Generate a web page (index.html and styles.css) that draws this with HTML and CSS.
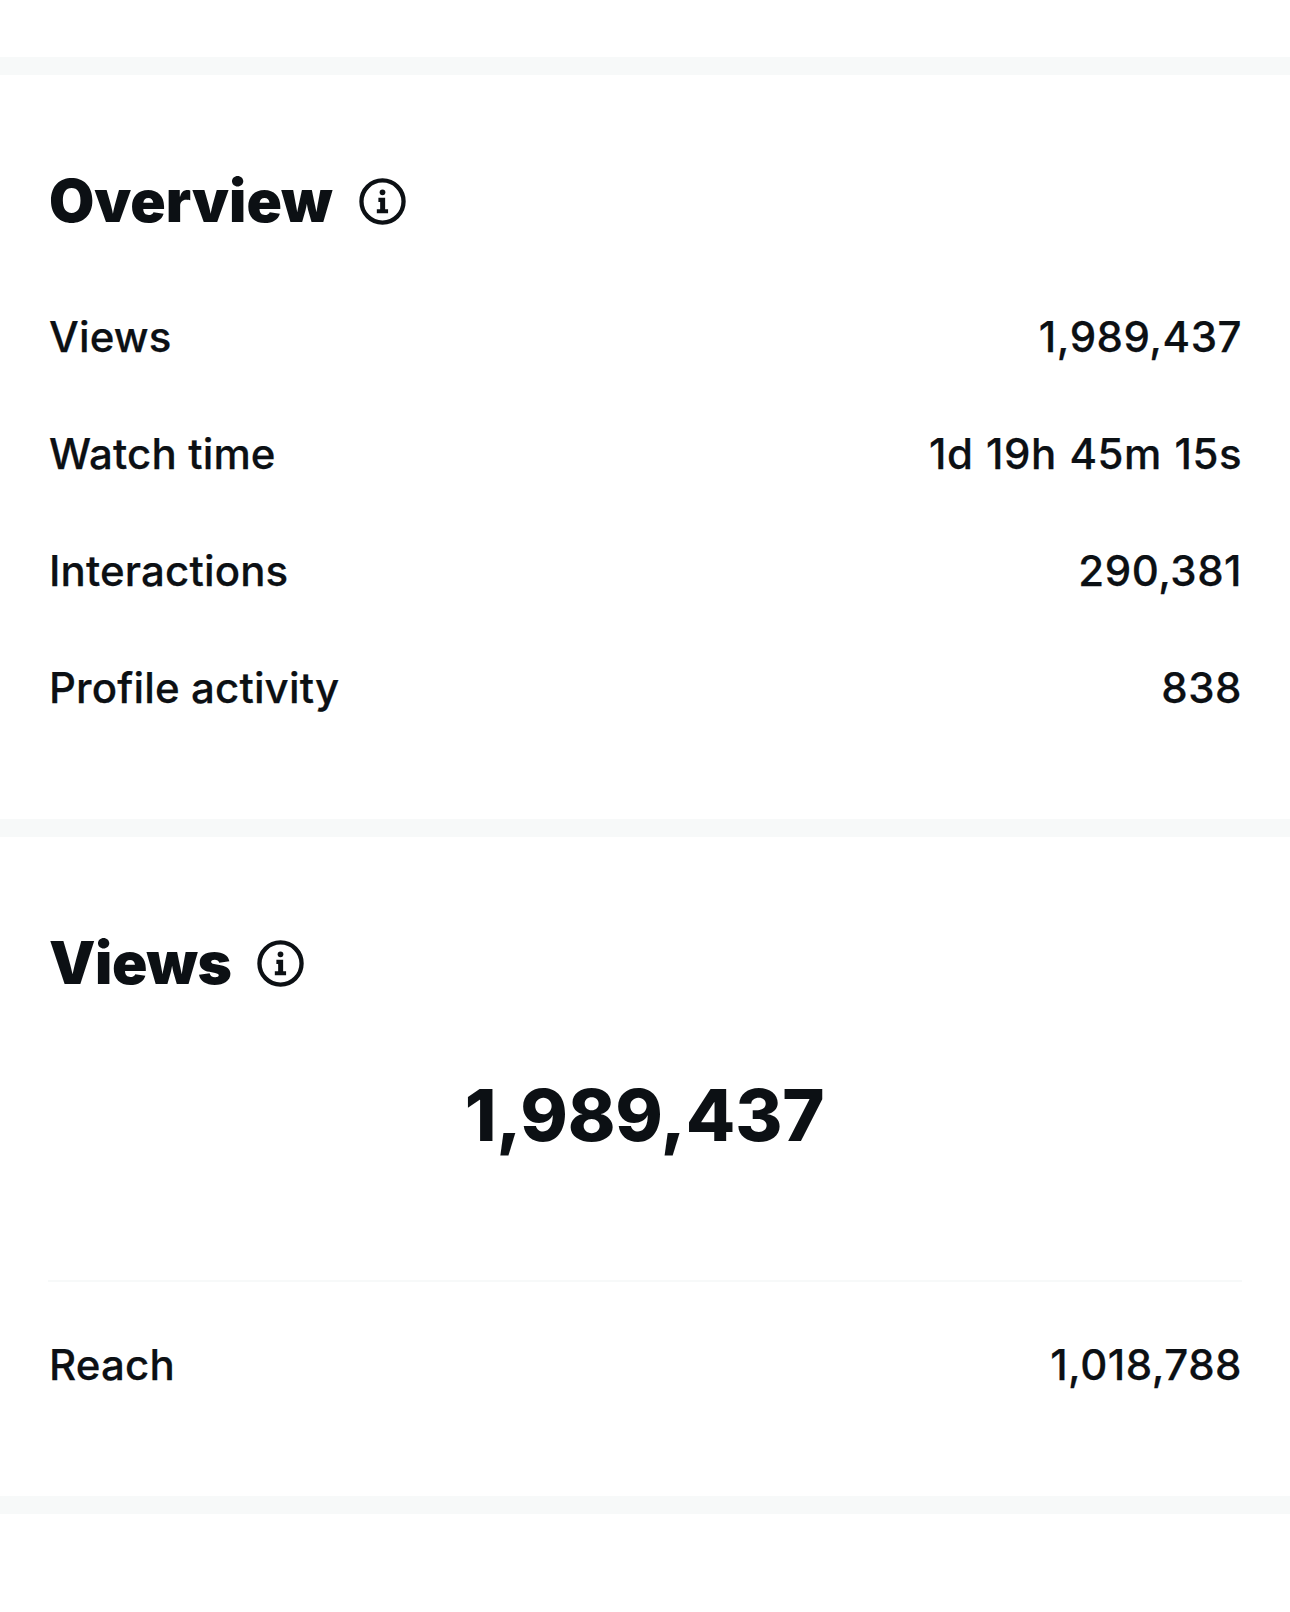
FILE: index.html
```html
<!DOCTYPE html>
<html lang="en">
<head>
<meta charset="utf-8">
<title>Insights</title>
<link rel="stylesheet" href="styles.css">
</head>
<body>
<div class="top-space"></div>
<div class="band"></div>
<section class="card overview">
  <div class="heading">
    <h2 class="title">Overview</h2>
    <svg class="info" viewBox="0 0 48 48" aria-hidden="true"><circle class="ring" cx="24" cy="24" r="21.5"/><circle class="dot" cx="24" cy="14.6" r="2.9"/><path class="stem" d="M19.8 20.2h6.9v11.6h3v4.3H18.2v-4.3h3.4v-7.4h-1.8z"/></svg>
  </div>
  <div class="rows">
    <div class="row"><span class="label">Views</span><span class="value">1,989,437</span></div>
    <div class="row"><span class="label">Watch time</span><span class="value">1d 19h 45m 15s</span></div>
    <div class="row"><span class="label">Interactions</span><span class="value">290,381</span></div>
    <div class="row"><span class="label">Profile activity</span><span class="value">838</span></div>
  </div>
</section>
<div class="band"></div>
<section class="card views">
  <div class="heading">
    <h2 class="title">Views</h2>
    <svg class="info" viewBox="0 0 48 48" aria-hidden="true"><circle class="ring" cx="24" cy="24" r="21.5"/><circle class="dot" cx="24" cy="14.6" r="2.9"/><path class="stem" d="M19.8 20.2h6.9v11.6h3v4.3H18.2v-4.3h3.4v-7.4h-1.8z"/></svg>
  </div>
  <div class="big">1,989,437</div>
  <div class="divider"></div>
  <div class="row reach"><span class="label">Reach</span><span class="value">1,018,788</span></div>
</section>
<div class="band"></div>
</body>
</html>
```
FILE: styles.css
```css
html, body { margin: 0; padding: 0; background: #fff; }
body { font-family: Inter, "Liberation Sans", sans-serif; color: #0c1014; height: 1612px; overflow: hidden; }
.top-space { height: 57px; }
.band { height: 18px; background: #f7f9f9; }
.card { padding: 0 48px 0 49px; box-sizing: border-box; }
.overview { height: 744px; }
.views { height: 659px; }
.heading { display: flex; align-items: center; gap: 26px; padding-top: 92px; height: 68px; }
.title { margin: 0; font-size: 58.5px; font-weight: 900; line-height: 68px; }
.views .title { letter-spacing: -0.4px; }
.info { width: 47px; height: 47px; flex: none; }
.ring { fill: none; stroke: #0c1014; stroke-width: 4.4; }
.dot, .stem { fill: #0c1014; }
.rows { padding-top: 43px; }
.row { display: flex; justify-content: space-between; height: 117px; align-items: center; font-size: 42px; font-weight: 500; -webkit-text-stroke: 0.25px #0c1014; }
.label { letter-spacing: 0.15px; }
.value { letter-spacing: 0.5px; word-spacing: 1px; }
.big { text-align: center; font-size: 72px; font-weight: 800; line-height: 88px; padding-top: 74px; padding-right: 2px; letter-spacing: -0.2px; }
.divider { height: 2px; background: #f7f9f9; margin: 121px 0 0 -1px; }
.reach { margin-top: 24px; }
```
